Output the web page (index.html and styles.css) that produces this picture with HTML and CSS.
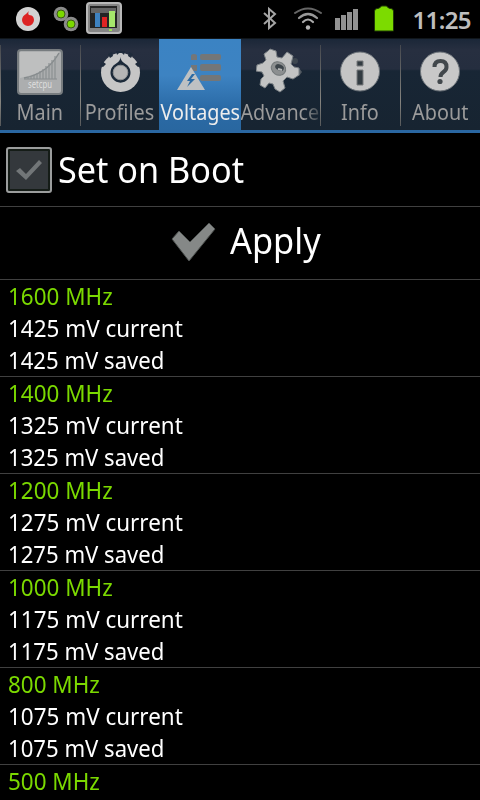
FILE: index.html
```html
<!DOCTYPE html>
<html lang="en">
<head>
    <meta charset="UTF-8">
    <meta name="viewport" content="width=device-width, initial-scale=1.0">
    <title>SetCPU</title>
    <link rel="stylesheet" href="styles.css">
</head>
<body>
<div class="status-bar">
    <div class="notifications">
        <svg class="icon-vodafone" width="26" height="26" viewBox="0 0 26 26">
            <circle cx="13" cy="13" r="12" fill="#d2d2d2"/>
            <path d="M14 5c-1 2-1 3 0 4 4 0 5 3 5 5a6 6 0 0 1-12 0c0-3 2-5 4-6 1-1 2-2 3-3z" fill="#dc2424"/>
        </svg>
        <svg class="icon-link" width="26" height="26" viewBox="0 0 26 26">
            <circle cx="8" cy="8" r="7.3" fill="#8b8b8b"/>
            <circle cx="18" cy="18" r="7.3" fill="#8b8b8b"/>
            <circle cx="8" cy="8" r="4" fill="#7bd900" stroke="#3c5a18"/>
            <circle cx="18" cy="18" r="4" fill="#7bd900" stroke="#3c5a18"/>
        </svg>
        <svg class="icon-monitor" width="38" height="34" viewBox="0 0 38 34">
            <rect x="2" y="2" width="34" height="30" rx="3" fill="#858585" stroke="#b9b9b9" stroke-width="2"/>
            <rect x="5" y="5" width="27" height="22" fill="#242424"/>
            <rect x="6" y="7" width="25" height="5" fill="#656565"/>
            <rect x="10" y="12" width="5" height="14" fill="#3e82c0"/>
            <rect x="17" y="16" width="5" height="10" fill="#e02323"/>
            <rect x="24" y="10" width="6" height="16" fill="#a5e66b"/>
            <path d="M24 29h3" stroke="#9be052" stroke-width="2"/>
        </svg>
    </div>
    <div class="system">
        <svg class="icon-bluetooth" width="16" height="26" viewBox="0 0 16 26">
            <path d="M2 7l11 10-6 5V3l6 5L2 18" fill="none" stroke="#a5a5a5" stroke-width="2"/>
        </svg>
        <svg class="icon-wifi" width="30" height="26" viewBox="0 0 30 26" fill="none" stroke-linecap="round">
            <path d="M2 7Q15-2 28 7" stroke="#666" stroke-width="2"/>
            <path d="M6 12Q15 4 24 12" stroke="#999" stroke-width="2.2"/>
            <path d="M10 16Q15 11 20 16" stroke="#aaa" stroke-width="2.2"/>
            <circle cx="15" cy="21.5" r="2.2" fill="#b5b5b5"/>
        </svg>
        <svg class="icon-signal" width="26" height="26" viewBox="0 0 26 26" fill="#929292">
            <rect x="2" y="12" width="5" height="12"/>
            <rect x="8" y="9" width="5" height="15"/>
            <rect x="14" y="6" width="5" height="18"/>
            <rect x="20" y="3" width="5" height="21"/>
        </svg>
        <svg class="icon-battery" width="22" height="28" viewBox="0 0 22 28">
            <path d="M1.500 6l1-2 4-1 2-2h5l2 2 4 1 1 2v20h-1H1.500z" fill="#7cdb00" stroke="#203b05"/>
        </svg>
        <span class="clock">11:25</span>
    </div>
</div>

<div class="tabs">
    <div class="tab">
        <svg width="48" height="48" viewBox="0 0 48 48">
            <rect x="2" y="2" width="44" height="44" rx="3" fill="#acaeaf" stroke="#777c7f" stroke-width="2"/>
            <path d="M4 30V4h39q-8 20-39 26z" fill="#bebfbf"/>
            <path d="M8 30Q31 26 43 5" fill="none" stroke="#858a8c" stroke-width="1.5"/>
            <path d="M8 31h33" stroke="#858a8c"/>
            <path d="M12 29v2M15 28v3M18 27v4M21 25v6M24 23v8M27 21v10M30 18v13M33 15v16M36 12v19M39 8v23" stroke="#8b9092" stroke-width="1.2"/>
            <text x="12" y="40" class="logo-text" textLength="24" lengthAdjust="spacingAndGlyphs">setcpu</text>
        </svg>
        <span class="label">Main</span>
    </div>
    <div class="tab">
        <svg width="48" height="48" viewBox="0 0 48 48">
            <circle cx="24.500" cy="24.500" r="19.500" fill="#c6c6c6"/>
            <path d="M20 3l1 4 2-2 3 0 2 2 1-4zM12 6l2 4 3-2-1-4zM37 6l-2 4-3-2 1-4zM6 13l4 3-3 3-3-1zM43 13l-4 3 3 3 3-1z" fill="#1f2b3b"/>
            <path d="M24.500 9c0 3 2 5 5 7a10 10 0 1 1-10 0c3-2 5-4 5-7z" fill="#1c2a39"/>
            <circle cx="24.500" cy="24.500" r="7.300" fill="#b5b5b5" stroke="#919496"/>
        </svg>
        <span class="label">Profiles</span>
    </div>
    <div class="tab selected">
        <svg width="48" height="48" viewBox="0 0 48 48">
            <g fill="#737678">
                <path d="M15 12V8q0-2 3-2t3 2v4zM15 17h6v6h-6z"/>
                <rect x="24" y="6" width="21" height="6" rx="2"/>
                <rect x="24" y="16" width="21" height="7" rx="2"/>
                <rect x="24" y="27" width="21" height="6" rx="2"/>
            </g>
            <path d="M15 19l14 23H1z" fill="#bec1c3"/>
            <path d="M16 26l-5 7h3l-3 6 8-8h-4l4-5z" fill="#2c6ba4"/>
        </svg>
        <span class="label">Voltages</span>
    </div>
    <div class="tab">
        <svg width="48" height="48" viewBox="0 0 48 48">
            <circle cx="39" cy="13" r="3" fill="#3d464f"/>
            <path d="M43 20l3 4-3 4-4-3z" fill="#525a62"/>
            <path d="M14 1l6 2 1 6 5 1 5-6 6 4-2 8 3 3 5 1v7l-6 4-6-2-4 4 2 7-5 4-5-3-2-5-4-1-4 5-5-3 1-6 3-3-2-4-6-1 1-6 6-2 3-3-2-6 4-3z" fill="#c2c3c3" stroke="#7b8185"/>
            <ellipse cx="22.500" cy="20.500" rx="7.500" ry="6.500" transform="rotate(35 22.500 20.500)" fill="#8c8f90" stroke="#73787a"/>
            <ellipse cx="23.500" cy="19.500" rx="4.500" ry="3" transform="rotate(25 23.500 19.500)" fill="#3c444a"/>
            <path d="M22 21l4 1" stroke="#b5b7b7" stroke-width="2"/>
        </svg>
        <span class="label cut">Advance</span>
    </div>
    <div class="tab divided">
        <svg width="48" height="48" viewBox="0 0 48 48">
            <circle cx="24" cy="23.5" r="19.5" fill="#c5c5c5" stroke="#6a7177"/>
            <path d="M21 13h6v5h-6zM21 22h6v15h-6z" fill="#333c42" stroke="#787b7c"/>
        </svg>
        <span class="label">Info</span>
    </div>
    <div class="tab divided">
        <svg width="48" height="48" viewBox="0 0 48 48">
            <circle cx="24" cy="23.5" r="19.5" fill="#c8c8c8" stroke="#6a7177"/>
            <path d="M18.500 19q0-6 6-6t6 6q0 3-3 5-3 2-3 5" fill="none" stroke="#42484c" stroke-width="4"/>
            <circle cx="24" cy="33.500" r="2.600" fill="#42484c"/>
        </svg>
        <span class="label">About</span>
    </div>
</div>

<div class="row boot">
    <span class="checkbox">
        <svg width="30" height="24" viewBox="0 0 30 24">
            <path d="M2 13l4-3 6 6L25 2l3 3-16 17z" fill="#727678"/>
        </svg>
    </span>
    <span class="boot-text">Set on Boot</span>
</div>

<div class="row apply">
    <svg width="48" height="42" viewBox="0 0 48 42">
        <path d="M3 17l7-8 11 11L40 1l6 6-26 32z" fill="#858887" stroke="#4c504e"/>
    </svg>
    <span class="apply-text">Apply</span>
</div>

<div class="voltages">
    <div class="voltage">
        <div class="freq">1600 MHz</div>
        <div class="current">1425 mV current</div>
        <div class="saved">1425 mV saved</div>
    </div>
    <div class="voltage">
        <div class="freq">1400 MHz</div>
        <div class="current">1325 mV current</div>
        <div class="saved">1325 mV saved</div>
    </div>
    <div class="voltage">
        <div class="freq">1200 MHz</div>
        <div class="current">1275 mV current</div>
        <div class="saved">1275 mV saved</div>
    </div>
    <div class="voltage">
        <div class="freq">1000 MHz</div>
        <div class="current">1175 mV current</div>
        <div class="saved">1175 mV saved</div>
    </div>
    <div class="voltage">
        <div class="freq">800 MHz</div>
        <div class="current">1075 mV current</div>
        <div class="saved">1075 mV saved</div>
    </div>
    <div class="voltage">
        <div class="freq">500 MHz</div>
    </div>
</div>
</body>
</html>
```

FILE: styles.css
```css
* {
    box-sizing: border-box;
}

body {
    margin: 0;
    width: 480px;
    height: 800px;
    overflow: hidden;
    background: #000;
    color: #fff;
    font-family: "Noto Sans", sans-serif;
}

svg {
    display: block;
    flex: none;
}

.status-bar {
    display: flex;
    justify-content: space-between;
    height: 38px;
    padding: 0 9px 0 15px;
}

.notifications, .system {
    display: flex;
    align-items: flex-start;
}

.icon-vodafone {
    margin-top: 6px;
}

.icon-link {
    margin: 6px 0 0 12px;
}

.icon-monitor {
    margin: 1px 0 0 6px;
}

.icon-bluetooth, .icon-wifi, .icon-signal {
    margin-top: 6px;
}

.icon-wifi {
    margin-left: 15px;
}

.icon-signal {
    margin-left: 10px;
}

.icon-battery {
    margin: 5px 0 0 14px;
}

.clock {
    margin-left: 17px;
    color: #bebebe;
    font-size: 24px;
    font-weight: 600;
    letter-spacing: -0.6px;
    line-height: 39px;
}

.tabs {
    display: grid;
    grid-template-columns: repeat(6, 80px);
    height: 95px;
    border-top: 1px solid #10161b;
    border-bottom: 3px solid #2a67a2;
    background: linear-gradient(#1b2738, #272f40 12%, #252e3f 33%, #182635 35%, #172431);
}

.tab {
    position: relative;
    display: flex;
    flex-direction: column;
    align-items: center;
    padding-top: 9px;
}

.tab:first-child::before, .tab:nth-child(2)::before, .divided::before {
    content: "";
    position: absolute;
    left: 0;
    top: 6px;
    width: 1px;
    height: 81px;
    background: linear-gradient(#45484e, #85847f 70%, #55585a);
}

.selected {
    width: 82px;
    margin-left: -1px;
    z-index: 1;
    background: linear-gradient(#3b83c3, #3d83c2 40%, #2b6ba7 75%, #2967a0);
}

.label {
    height: 32px;
    color: #9b9b9b;
    font-size: 22px;
    line-height: 31px;
    white-space: nowrap;
    transform: scaleX(0.9);
}

.selected .label {
    color: #ededed;
}

.cut {
    background: linear-gradient(90deg, #9b9b9b 80%, #3c454d);
    background-clip: text;
    color: transparent;
}

.logo-text {
    fill: #dedede;
    font-size: 10px;
}

.row {
    display: flex;
    align-items: center;
    height: 74px;
    border-bottom: 1px solid #404040;
}

.boot {
    padding-left: 6px;
}

.checkbox {
    display: flex;
    align-items: center;
    justify-content: center;
    width: 46px;
    height: 46px;
    border: 2px solid #9b9d9d;
    border-radius: 3px;
    background: #34383c;
    box-shadow: inset 0 0 0 2px #151c17;
}

.boot-text {
    margin-left: 6px;
    padding-top: 1px;
    font-size: 36px;
    line-height: 48px;
    transform: scaleX(0.95);
    transform-origin: left;
}

.apply {
    height: 73px;
    padding-left: 169px;
}

.apply-text {
    margin-left: 13px;
    padding-bottom: 4px;
    font-size: 36px;
    line-height: 48px;
    transform: scaleX(0.955);
    transform-origin: left;
}

.voltage {
    height: 97px;
    padding-left: 8px;
    border-bottom: 1px solid #404040;
    font-size: 24px;
    line-height: 32px;
}

.voltage:last-child {
    height: 35px;
    border-bottom: none;
}

.freq, .current, .saved {
    transform: scaleX(0.935);
    transform-origin: left;
}

.freq {
    color: #7bd900;
}

.saved {
    transform: scaleX(0.922);
}
```
